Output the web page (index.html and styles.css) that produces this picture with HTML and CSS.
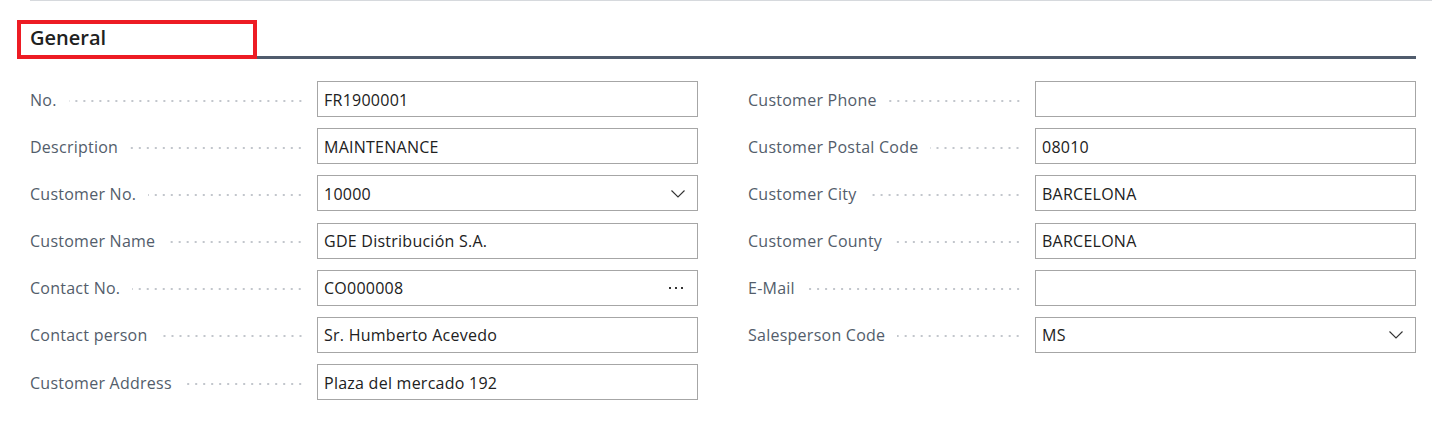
FILE: index.html
```html
<!DOCTYPE html>
<html lang="en">
<head>
    <meta charset="UTF-8">
    <meta name="viewport" content="width=device-width, initial-scale=1.0">
    <title>General</title>
    <link rel="stylesheet" href="styles.css">
</head>

<body>
<div class="top-rule"></div>

<section class="fasttab">
  <div class="fasttab-header">
    <h2 class="fasttab-title">General</h2>
    <div class="highlight"></div>
  </div>

  <div class="fields">
    <div class="column">
      <div class="field">
        <div class="caption"><span>No.</span><i class="leader"></i></div>
        <div class="value">FR1900001</div>
      </div>
      <div class="field">
        <div class="caption"><span>Description</span><i class="leader"></i></div>
        <div class="value">MAINTENANCE</div>
      </div>
      <div class="field">
        <div class="caption"><span>Customer No.</span><i class="leader"></i></div>
        <div class="value">10000
          <svg class="chevron" width="14" height="8" viewBox="0 0 14 8"><path d="M0.5 0.5 L7 7 L13.5 0.5" fill="none" stroke="#333" stroke-width="1.1"/></svg>
        </div>
      </div>
      <div class="field">
        <div class="caption"><span>Customer Name</span><i class="leader"></i></div>
        <div class="value">GDE Distribución S.A.</div>
      </div>
      <div class="field">
        <div class="caption"><span>Contact No.</span><i class="leader"></i></div>
        <div class="value">CO000008
          <span class="ellipsis"><b></b><b></b><b></b></span>
        </div>
      </div>
      <div class="field">
        <div class="caption"><span>Contact person</span><i class="leader"></i></div>
        <div class="value">Sr. Humberto Acevedo</div>
      </div>
      <div class="field">
        <div class="caption"><span>Customer Address</span><i class="leader"></i></div>
        <div class="value">Plaza del mercado 192</div>
      </div>
    </div>

    <div class="column">
      <div class="field">
        <div class="caption"><span>Customer Phone</span><i class="leader"></i></div>
        <div class="value"></div>
      </div>
      <div class="field">
        <div class="caption"><span>Customer Postal Code</span><i class="leader"></i></div>
        <div class="value">08010</div>
      </div>
      <div class="field">
        <div class="caption"><span>Customer City</span><i class="leader"></i></div>
        <div class="value">BARCELONA</div>
      </div>
      <div class="field">
        <div class="caption"><span>Customer County</span><i class="leader"></i></div>
        <div class="value">BARCELONA</div>
      </div>
      <div class="field">
        <div class="caption"><span>E-Mail</span><i class="leader"></i></div>
        <div class="value"></div>
      </div>
      <div class="field">
        <div class="caption"><span>Salesperson Code</span><i class="leader"></i></div>
        <div class="value">MS
          <svg class="chevron" width="14" height="8" viewBox="0 0 14 8"><path d="M0.5 0.5 L7 7 L13.5 0.5" fill="none" stroke="#333" stroke-width="1.1"/></svg>
        </div>
      </div>
    </div>
  </div>
</section>
</body>
</html>
```

FILE: styles.css
```css
body {
  margin: 0;
  background: #fff;
  font-family: "Segoe UI", "Open Sans", sans-serif;
  color: #212121;
}

.top-rule {
  height: 1px;
  margin-left: 30px;
  background: #d6d9dd;
}

.fasttab {
  padding: 0 16px 0 17px;
}

.fasttab-header {
  position: relative;
  height: 55px;
  border-bottom: 3px solid #505c6d;
  display: flex;
  align-items: flex-end;
}

.fasttab-title {
  margin: 0 0 5px 13px;
  font-size: 20px;
  font-weight: 600;
  line-height: 26px;
  color: #212121;
}

/* red annotation frame */
.highlight {
  position: absolute;
  left: 0;
  top: 19px;
  width: 240px;
  height: 39px;
  box-sizing: border-box;
  border: 4px solid #ed1c24;
}

.fields {
  display: grid;
  grid-template-columns: 668px 668px;
  column-gap: 50px;
  padding: 22px 0 0 13px;
}

.field {
  display: grid;
  grid-template-columns: 287px 381px;
  height: 36px;
  margin-bottom: 11.2px;
}

.caption {
  display: flex;
  align-items: center;
  padding: 1px 13px 0 0;
  font-size: 16px;
  letter-spacing: 0.25px;
  color: #535d6b;
  white-space: nowrap;
}

.leader {
  flex: 1;
  height: 4px;
  margin: 2px 0 0 12px;
  background-image: radial-gradient(circle, #c2c6cc 0.9px, transparent 1.3px);
  background-size: 8px 4px;
  background-repeat: repeat-x;
  background-position: right center;
}

.value {
  display: flex;
  align-items: center;
  box-sizing: border-box;
  border: 1px solid #a6a6a6;
  padding: 1px 12px 0 6px;
  font-size: 16px;
  letter-spacing: 0.25px;
  color: #212121;
}

.chevron {
  margin-left: auto;
  margin-top: 0;
}

.ellipsis {
  margin-left: auto;
  margin-right: 2px;
  margin-top: -1px;
  display: flex;
  gap: 4px;
}

.ellipsis b {
  width: 2px;
  height: 2px;
  background: #333;
}
```
